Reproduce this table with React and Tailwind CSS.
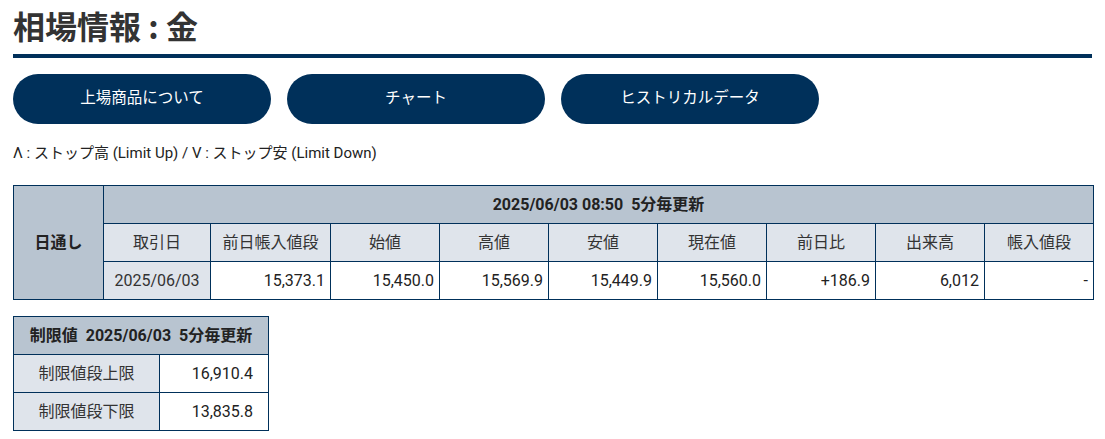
import React from "react";

const font = { fontFamily: 'Roboto, "Noto Sans CJK JP", sans-serif' };

export default function App() {
  const heads = ["取引日", "前日帳入値段", "始値", "高値", "安値", "現在値", "前日比", "出来高", "帳入値段"];
  const vals = ["15,373.1", "15,450.0", "15,569.9", "15,449.9", "15,560.0", "+186.9", "6,012", "-"];
  const cols = [90, 107, 120, 109, 109, 109, 109, 109, 109, 109];
  return (
    <div className="bg-white w-[1105px] h-[439px] px-[13px] text-[#222]" style={font}>
      <h1 className="pt-[7px] pb-[10px] text-[32px] leading-[37px] font-bold text-[#333] border-b-4 border-[#00305a] [font-family:'Noto_Sans_CJK_JP',sans-serif]">
        相場情報 : 金
      </h1>
      <div className="flex gap-[16px] mt-[16px]">
        {["上場商品について", "チャート", "ヒストリカルデータ"].map((t) => (
          <div
            key={t}
            className="w-[258px] h-[50px] rounded-full bg-[#00305a] text-white text-[15.5px] flex items-center justify-center"
          >
            {t}
          </div>
        ))}
      </div>
      <p className="mt-[19px] text-[15px] leading-[20px] text-[#222]">
        Λ : ストップ高 (Limit Up) / V : ストップ安 (Limit Down)
      </p>
      <table className="mt-[22px] border-collapse table-fixed w-[1080px] text-[16px]">
        <colgroup>
          {cols.map((w, i) => (
            <col key={i} style={{ width: w }} />
          ))}
        </colgroup>
        <tbody>
          <tr className="h-[38px]">
            <td rowSpan={3} className="border border-[#00305a] bg-[#b8c4d0] text-center font-bold">
              日通し
            </td>
            <td colSpan={9} className="border border-[#00305a] bg-[#b8c4d0] text-center font-bold whitespace-pre">
              2025/06/03 08:50  5分毎更新
            </td>
          </tr>
          <tr className="h-[38px]">
            {heads.map((h) => (
              <td key={h} className="border border-[#00305a] bg-[#dfe4eb] text-center text-[#333]">
                {h}
              </td>
            ))}
          </tr>
          <tr className="h-[38px]">
            <td className="border border-[#00305a] bg-[#dfe4eb] text-center text-[#333]">2025/06/03</td>
            {vals.map((v, i) => (
              <td key={i} className="border border-[#00305a] bg-white text-right px-[5px]">
                {v}
              </td>
            ))}
          </tr>
        </tbody>
      </table>
      <table className="mt-[16px] border-collapse table-fixed w-[255px] text-[16px]">
        <colgroup>
          <col style={{ width: 146 }} />
          <col style={{ width: 109 }} />
        </colgroup>
        <tbody>
          <tr className="h-[38px]">
            <td colSpan={2} className="border border-[#00305a] bg-[#b8c4d0] text-center font-bold whitespace-pre">
              制限値  2025/06/03  5分毎更新
            </td>
          </tr>
          <tr className="h-[38px]">
            <td className="border border-[#00305a] bg-[#dfe4eb] text-center text-[#333]">制限値段上限</td>
            <td className="border border-[#00305a] bg-white text-right pr-[15px]">16,910.4</td>
          </tr>
          <tr className="h-[38px]">
            <td className="border border-[#00305a] bg-[#dfe4eb] text-center text-[#333]">制限値段下限</td>
            <td className="border border-[#00305a] bg-white text-right pr-[15px]">13,835.8</td>
          </tr>
        </tbody>
      </table>
    </div>
  );
}
